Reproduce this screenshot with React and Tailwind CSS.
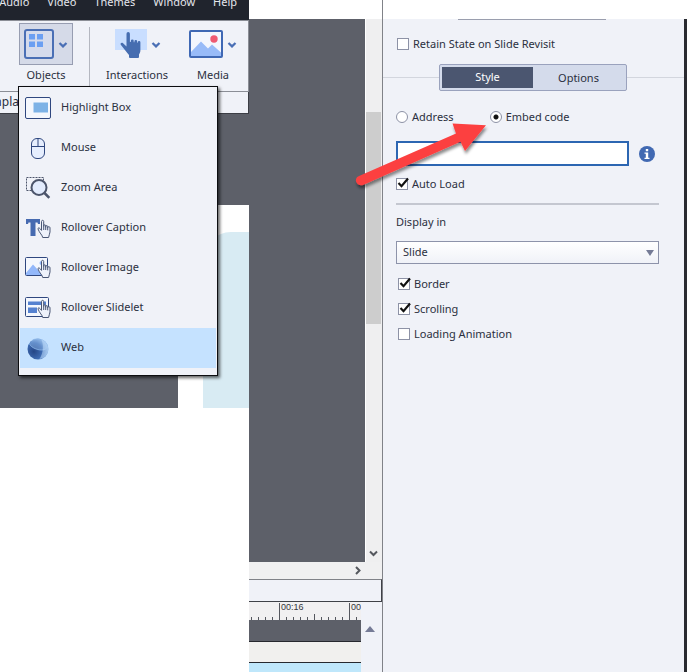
import React, { useState } from 'react';
import clsx from 'clsx';

const MENUS = ['Audio', 'Video', 'Themes', 'Window', 'Help'];

const OBJECTS = [
  { label: 'Highlight Box', Icon: HighlightBoxIcon },
  { label: 'Mouse', Icon: MouseIcon },
  { label: 'Zoom Area', Icon: ZoomAreaIcon },
  { label: 'Rollover Caption', Icon: RolloverCaptionIcon },
  { label: 'Rollover Image', Icon: RolloverImageIcon },
  { label: 'Rollover Slidelet', Icon: RolloverSlideletIcon },
  { label: 'Web', Icon: WebIcon },
];

/* ---------- icons ---------- */

function Chevron() {
  return (
    <svg width="10" height="8" viewBox="0 0 10 8" fill="none" aria-hidden="true">
      <path d="M1.500 3 5 6.400 8.500 3" stroke="#4a6fb5" strokeWidth="2.200" />
    </svg>
  );
}

function ObjectsIcon() {
  return (
    <svg width="30" height="30" viewBox="0 0 30 30" fill="none" aria-hidden="true">
      <rect x="1" y="1" width="28" height="28" rx="2" fill="#d5dbec" stroke="#4a6fb5" strokeWidth="2" />
      <path d="M5 5h6v5.500H5zM13 5h6v5.500h-6zM5 12.500h6V18H5zM13 12.500h6V18h-6z" fill="#6b9ff2" />
    </svg>
  );
}

function InteractionsIcon() {
  return (
    <svg width="34" height="30" viewBox="-2 0 34 30" aria-hidden="true">
      <path d="M0 0h32v21H0z" fill="#c9deff" />
      <path
        d="M11.500 4.800a1.700 1.700 0 0 1 3.400 0v8l1 .1v-1.100a1.400 1.400 0 0 1 2.800 0v1.400h.7v-.8a1.400 1.400 0 0 1 2.800 0v1.400h.6v-.5a1.300 1.300 0 0 1 2.600 0V21c0 2-.6 3.300-1.400 4.500V28a1 1 0 0 1-1 1h-8a1 1 0 0 1-1-1v-2C12 24 9 19.500 5.800 15.800c-1-1.300.6-2.600 2-1.800l3.700 3.600z"
        fill="#466db0"
      />
    </svg>
  );
}

function MediaIcon() {
  return (
    <svg width="34" height="28" viewBox="0 0 34 28" aria-hidden="true">
      <rect x="1" y="1" width="32" height="26" rx="1" fill="#f3f6fd" stroke="#3f68b4" strokeWidth="2" />
      <path d="M2 22 12 11.500l7 7L23 14.500l9 8V26H2z" fill="#98bbf8" />
      <circle cx="25" cy="9" r="3.700" fill="#ee5a72" />
    </svg>
  );
}

// small outlined hand shared by the rollover icons
function Hand() {
  return (
    <path
      d="M16.500 6.500c0-1.600 2.200-1.600 2.200 0v5.300-1c0-1.300 2-1.300 2 0v1.400-.6c0-1.300 2-1.300 2 0v1.300-.4c0-1.100 2.300-1.100 2.300.2v4.300c0 2.300-1.400 3.200-1.400 5.500h-5.900c0-2-3.400-4.700-4.700-8.500-.2-1.300 1.200-1.500 1.900-.5l1.600 1.900zM18.700 12v3M20.700 12v3M22.700 12.700v2.600"
      fill="#eef2fb"
      stroke="#4a5775"
      strokeWidth="1"
      strokeLinejoin="round"
    />
  );
}

function IconFrame({ children }) {
  return (
    <svg width="28" height="26" viewBox="0 0 28 26" fill="none" aria-hidden="true">
      {children}
    </svg>
  );
}

function HighlightBoxIcon() {
  return (
    <IconFrame>
      <rect x="0.500" y="2.500" width="25" height="21" rx="1.500" fill="#f4f7fd" stroke="#2f477f" />
      <path d="M8.500 7.500H23v10H8.500z" fill="#7db2e6" />
    </IconFrame>
  );
}

function MouseIcon() {
  return (
    <IconFrame>
      <rect x="6.500" y="3.500" width="13" height="20" rx="5.500" fill="#e6eefe" stroke="#2f477f" />
      <path d="M6.500 11.500h13M13 3.500v8" stroke="#2f477f" />
    </IconFrame>
  );
}

function ZoomAreaIcon() {
  return (
    <IconFrame>
      <path d="M1.500 2.500h17v13h-17z" stroke="#4c556b" strokeDasharray="2 1" />
      <circle cx="14" cy="12.500" r="7.500" fill="#e3ecfd" stroke="#4c556b" strokeWidth="2" />
      <path d="m19.500 18 4.800 4.800" stroke="#4c556b" strokeWidth="2.500" />
    </IconFrame>
  );
}

function RolloverCaptionIcon() {
  return (
    <IconFrame>
      <path d="M1 4h14v5h-2l-.500-1.500h-2V21h-5V7.500h-2L3 9H1z" fill="#466ab0" />
      <Hand />
    </IconFrame>
  );
}

function RolloverImageIcon() {
  return (
    <IconFrame>
      <rect x="0.500" y="2.500" width="22" height="18" rx="1" fill="#f4f7fd" stroke="#2f477f" />
      <path d="m1 18 7-8.500 6 6.500 4-3 4 3v4H1z" fill="#93b8fa" />
      <circle cx="16.500" cy="8" r="2" fill="#93b8fa" />
      <Hand />
    </IconFrame>
  );
}

function RolloverSlideletIcon() {
  return (
    <IconFrame>
      <rect x="0.500" y="2.500" width="23" height="19" rx="1" fill="#f4f7fd" stroke="#2f477f" />
      <path d="M3 6.500h18V10H3zM3 12.500h9V18H3z" fill="#5682d0" />
      <Hand />
    </IconFrame>
  );
}

function WebIcon() {
  return (
    <IconFrame>
      <defs>
        <radialGradient id="globe" cx="0.3" cy="0.62" r="0.75">
          <stop offset="0" stopColor="#254686" />
          <stop offset="0.55" stopColor="#3f6db4" />
          <stop offset="1" stopColor="#9cc3ee" />
        </radialGradient>
      </defs>
      <circle cx="13" cy="14" r="10.500" fill="url(#globe)" />
      <path
        d="M7.500 5c4-2 11-1 14 4 2 4-1 6-5 6-6 0-12-4-12-6.500"
        fill="#a9cff5"
        fillOpacity="0.35"
        stroke="#8db7ea"
        strokeWidth="0.8"
      />
      <path d="M16 4c3 5 2.500 14-1.500 20 8-1 11-10 7-15.500C20.500 6.500 18.500 5 16 4z" fill="#c5e1fd" fillOpacity="0.5" />
    </IconFrame>
  );
}

function InfoIcon() {
  return (
    <svg width="16" height="16" viewBox="0 0 16 16" aria-hidden="true">
      <circle cx="8" cy="8" r="8" fill="#4169b2" />
      <path d="M6.800 3h2.400v2.200H6.800zM5.500 6.500h3.700v5.200h1.300V13h-5v-1.300h1.300V7.800H5.500z" fill="#fff" />
    </svg>
  );
}

function Arrow() {
  return (
    <svg
      className="pointer-events-none absolute top-[115px] -left-8"
      width="144"
      height="76"
      viewBox="351 115 144 76"
      aria-hidden="true"
    >
      <defs>
        <filter id="arrow-shadow" x="-10%" y="-10%" width="130%" height="140%">
          <feDropShadow dx="1" dy="3" stdDeviation="1.500" floodColor="#000" floodOpacity="0.45" />
        </filter>
      </defs>
      <path
        d="M358.500 176.300 456 133.500 452.500 123.500 486 125.200 465 151 460.500 141.700 363 185c-6 2-10-6-4.500-8.700z"
        fill="#fc4141"
        filter="url(#arrow-shadow)"
      />
    </svg>
  );
}

/* ---------- controls ---------- */

function Tick({ label, checked = false }) {
  const [on, setOn] = useState(checked);
  return (
    <label className="flex items-center gap-1">
      <span className="relative flex">
        <input
          type="checkbox"
          checked={on}
          onChange={(e) => setOn(e.target.checked)}
          className="size-3 appearance-none border border-[#8d92a6] bg-white"
        />
        {on ? (
          <svg
            className="pointer-events-none absolute -top-px left-0"
            width="13"
            height="12"
            viewBox="0 0 13 12"
            fill="none"
            aria-hidden="true"
          >
            <path d="M2.500 6 5.500 9.200 12 1.500" stroke="#111" strokeWidth="2.200" />
          </svg>
        ) : null}
      </span>
      {label}
    </label>
  );
}

function Radio({ label, value, current, onChange }) {
  return (
    <label className="flex items-center gap-1">
      <input
        type="radio"
        name="source"
        value={value}
        checked={current === value}
        onChange={() => onChange(value)}
        className="size-3 appearance-none rounded-full border border-[#8d92a6] bg-white checked:bg-[radial-gradient(circle,#111_0_2px,#fff_3px)]"
      />
      {label}
    </label>
  );
}

function ToolButton({ label, active, children }) {
  return (
    <button type="button" className="flex flex-col items-center gap-[2px]">
      <span
        className={clsx(
          'flex h-[42px] items-center gap-1 border px-1',
          active ? 'border-[#979db1] bg-[#d5dae8]' : 'border-transparent',
        )}
      >
        {children}
        <Chevron />
      </span>
      <span className="leading-4">{label}</span>
    </button>
  );
}

/* ---------- sections ---------- */

function ObjectsMenu() {
  return (
    <ul className="absolute top-[86px] left-[18px] w-[200px] border border-[#0c0d10] bg-[#f0f2f8] px-px pt-px pb-[7px] shadow-[2px_2px_3px_rgba(0,0,0,0.6)]">
      {OBJECTS.map(({ label, Icon }) => (
        <li key={label}>
          <button
            type="button"
            className={clsx(
              'flex h-10 w-full items-center gap-2 pl-[5px] text-left',
              label === 'Web' && 'bg-[#c5e2ff]',
            )}
          >
            <Icon />
            <span className="pb-[2px]">{label}</span>
          </button>
        </li>
      ))}
    </ul>
  );
}

function EditorPane() {
  return (
    <section className="relative h-[408px] w-[249px] shrink-0">
      <div className="flex h-full flex-col overflow-hidden">
        <nav className="flex h-5 shrink-0 items-end justify-end gap-[18px] bg-[#20242d] pr-3 pb-[10px] leading-4 text-[#e4e6ec]">
          {MENUS.map((menu) => (
            <button key={menu} type="button">
              {menu}
            </button>
          ))}
        </nav>
        <div className="flex h-[72px] shrink-0 items-start border-t border-r border-b border-[#8b8e96] bg-[#f0f2f8] pt-[2px] pl-[19px]">
          <ToolButton label="Objects" active>
            <ObjectsIcon />
          </ToolButton>
          <div className="mt-1 ml-4 h-[62px] w-px bg-[#b4b7c0]" />
          <div className="ml-4 flex gap-4">
            <ToolButton label="Interactions">
              <InteractionsIcon />
            </ToolButton>
            <ToolButton label="Media">
              <MediaIcon />
            </ToolButton>
          </div>
        </div>
        <div className="h-[22px] shrink-0 border-r border-b border-[#3c3e45] bg-[#f0f2f8]">
          <div className="flex w-[19px] justify-end overflow-hidden text-[12px] leading-5">mpla</div>
        </div>
        <div className="flex flex-1 justify-end bg-[#5d6069] pt-[91px]">
          <div className="w-[71px] bg-white pt-[27px] pl-[25px]">
            <div className="h-full rounded-tl-[28px] bg-[#d8ebf3]" />
          </div>
        </div>
      </div>
      <ObjectsMenu />
    </section>
  );
}

function Ruler() {
  return (
    <div className="h-[18px] bg-[#f1f0f1]">
      <svg width="112" height="18" fill="none" aria-hidden="true">
        <path
          d="M2.500 15v3M9.500 15v3M16.500 15v3M23.500 15v3M30.500 1v17M37.500 15v3M44.500 15v3M51.500 15v3M58.500 15v3M65.500 12v6M72.500 15v3M79.500 15v3M86.500 15v3M93.500 15v3M100.500 1v17M107.500 15v3"
          stroke="#55575e"
        />
        <g fill="#33353c" className="font-['Liberation_Sans',sans-serif] text-[9px]">
          <text x="32" y="8">
            00:16
          </text>
          <text x="102" y="8">
            00
          </text>
        </g>
      </svg>
    </div>
  );
}

function CanvasPane() {
  return (
    <section className="flex w-[134px] shrink-0 flex-col border-r border-[#808288] pt-[19px]">
      <div className="flex h-[543px]">
        <div className="flex-1 bg-[#5d6069]" />
        <div className="flex w-[17px] flex-col border-l border-white bg-[#efeff0] pt-[93px]">
          <div className="h-[212px] w-[15px] bg-[#cdcdcd]" />
          <svg className="mt-auto mb-1 ml-[3px]" width="9" height="9" viewBox="0 0 9 9" fill="none" aria-hidden="true">
            <path d="M1 2.500 4.500 6 8 2.500" stroke="#55585e" strokeWidth="2" />
          </svg>
        </div>
      </div>
      <div className="flex h-[17px] items-center justify-end bg-[#f0f0f1] pr-5">
        <svg width="9" height="9" viewBox="0 0 9 9" fill="none" aria-hidden="true">
          <path d="M3 1 6.500 4.500 3 8" stroke="#55585e" strokeWidth="2" />
        </svg>
      </div>
      <div className="h-[23px] border-t border-r border-b border-[#3f4147] border-t-[#808288] bg-[#f0f2f8]" />
      <div className="flex flex-1 bg-[#f0f2f8]">
        <div className="flex w-[112px] flex-col">
          <Ruler />
          <div className="h-[22px] border-b border-[#26282e] bg-[#5d6069]" />
          <div className="h-[21px] border-b border-[#26282e] bg-[#f1f0ee]" />
          <div className="flex-1 bg-[#bfe7fb]" />
        </div>
        <svg className="mt-6 ml-1" width="10" height="6" viewBox="0 0 10 6" aria-hidden="true">
          <path d="M0 6 5 0l5 6z" fill="#757b96" />
        </svg>
      </div>
    </section>
  );
}

function PropertiesPanel() {
  const [source, setSource] = useState('embed');
  const [tab, setTab] = useState('Style');
  return (
    <section className="relative flex-1 pt-[19px]">
      <div className="flex h-full flex-col border-r-3 border-[#2a2b30] bg-[#f0f2f8]">
        <div className="ml-[75px] h-px w-[148px] bg-[#9a9eae]" />
        <div className="pt-4 pl-[14px] leading-4">
          <Tick label="Retain State on Slide Revisit" />
        </div>
        <div className="mt-3 flex items-center">
          <div className="h-px w-14 bg-[#d3d6de]" />
          <div className="flex h-[27px] w-[188px] rounded-xs border border-[#9aa2bd] bg-[#d4dbeb] p-[2px]">
            {['Style', 'Options'].map((name) => (
              <button
                key={name}
                type="button"
                onClick={() => setTab(name)}
                className={clsx('flex-1 leading-4', tab === name && 'bg-[#4b5670] pb-[2px] text-white')}
              >
                {name}
              </button>
            ))}
          </div>
          <div className="h-px flex-1 bg-[#d3d6de]" />
        </div>
        <div className="flex flex-col pr-[25px] pl-[13px]">
          <div className="mt-[18px] flex gap-9 leading-4">
            <Radio label="Address" value="address" current={source} onChange={setSource} />
            <Radio label="Embed code" value="embed" current={source} onChange={setSource} />
          </div>
          <div className="mt-4 flex items-center gap-[10px] pr-1">
            <input
              type="text"
              aria-label="Embed code"
              className="h-[25px] min-w-0 flex-1 border-2 border-[#2c66b2] bg-white px-1 outline-none"
            />
            <button type="button" aria-label="Info">
              <InfoIcon />
            </button>
          </div>
          <div className="mt-[10px] leading-4">
            <Tick label="Auto Load" checked />
          </div>
          <hr className="mt-[11px] border-t-2 border-[#c4c7d0]" />
          <label htmlFor="display-in" className="mt-[9px] leading-4">
            Display in
          </label>
          <div className="relative mt-[11px]">
            <select
              id="display-in"
              className="h-[23px] w-full appearance-none border border-[#8d93aa] bg-linear-to-b from-white to-[#f0f2f8] pl-[6px]"
            >
              <option>Slide</option>
            </select>
            <svg
              className="pointer-events-none absolute top-[9px] right-[5px]"
              width="8"
              height="6"
              viewBox="0 0 8 6"
              aria-hidden="true"
            >
              <path d="M0 0h8L4 6z" fill="#757b96" />
            </svg>
          </div>
          <div className="mt-3 flex flex-col gap-[9px] pl-[2px] leading-4">
            <Tick label="Border" checked />
            <Tick label="Scrolling" checked />
            <Tick label="Loading Animation" />
          </div>
        </div>
      </div>
      <Arrow />
    </section>
  );
}

export default function App() {
  return (
    <main className="flex min-h-screen bg-white font-['Noto_Sans',sans-serif] text-[11px] text-[#2b3040]">
      <EditorPane />
      <CanvasPane />
      <PropertiesPanel />
    </main>
  );
}
